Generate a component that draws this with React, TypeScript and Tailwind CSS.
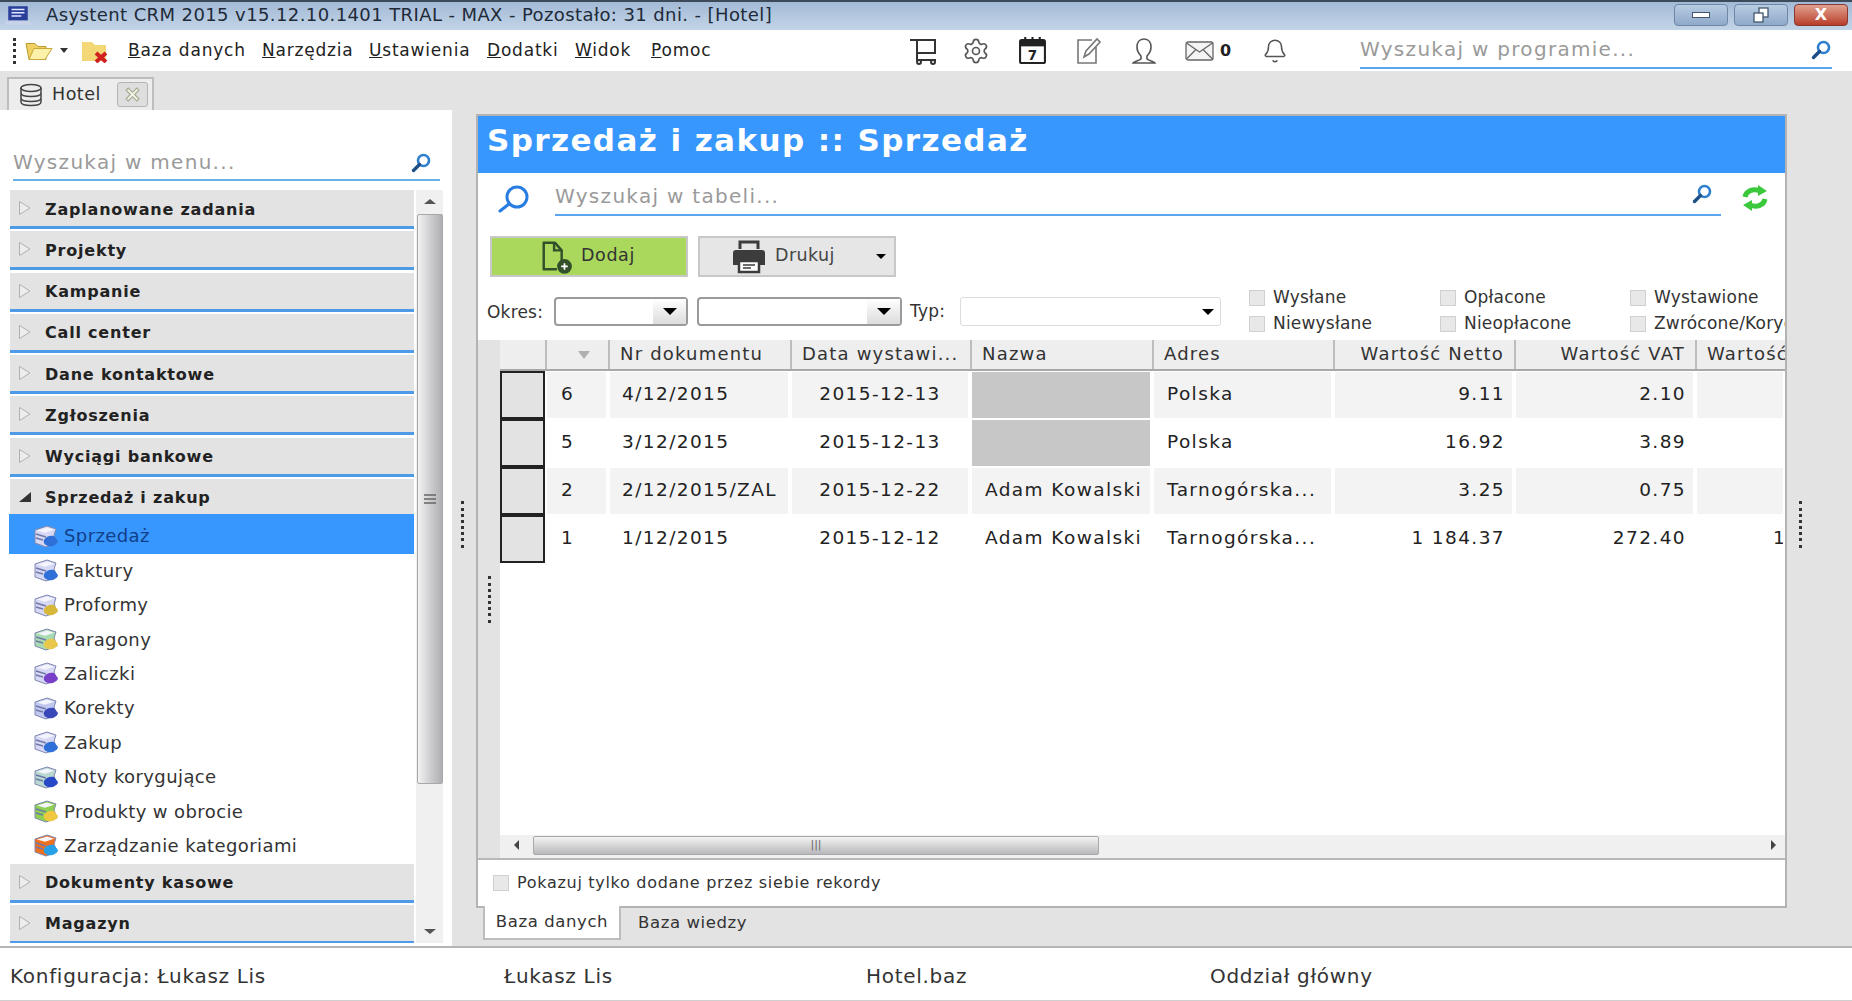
import { Settings, Bell } from 'lucide-react'

const font = "font-['DejaVu_Sans',sans-serif]"

const menus = [
  { first: 'B', rest: 'aza danych', w: 'w-[134px]' },
  { first: 'N', rest: 'arzędzia', w: 'w-[107px]' },
  { first: 'U', rest: 'stawienia', w: 'w-[118px]' },
  { first: 'D', rest: 'odatki', w: 'w-[88px]' },
  { first: 'W', rest: 'idok', w: 'w-[76px]' },
  { first: 'P', rest: 'omoc', w: 'w-[258px]' },
]

const groupsTop = ['Zaplanowane zadania', 'Projekty', 'Kampanie', 'Call center', 'Dane kontaktowe', 'Zgłoszenia', 'Wyciągi bankowe']

const items = [
  { label: 'Sprzedaż', a: '#d6d8f5', b: '#2f6fd8', active: true },
  { label: 'Faktury', a: '#d6d8f5', b: '#2f6fd8' },
  { label: 'Proformy', a: '#d6d8f5', b: '#d8b83a' },
  { label: 'Paragony', a: '#a8dcb0', b: '#e8c84a' },
  { label: 'Zaliczki', a: '#d6d8f5', b: '#7a3fc8' },
  { label: 'Korekty', a: '#c0c8f0', b: '#3848b8' },
  { label: 'Zakup', a: '#d6d8f5', b: '#2f6fd8' },
  { label: 'Noty korygujące', a: '#b8d8d0', b: '#2848c8' },
  { label: 'Produkty w obrocie', a: '#8fd050', b: '#f0c840' },
  { label: 'Zarządzanie kategoriami', a: '#f07020', b: '#28a0e8' },
]

const rows = [
  { id: '6', nr: '4/12/2015', date: '2015-12-13', name: '', addr: 'Polska', net: '9.11', vat: '2.10', rest: '' },
  { id: '5', nr: '3/12/2015', date: '2015-12-13', name: '', addr: 'Polska', net: '16.92', vat: '3.89', rest: '' },
  { id: '2', nr: '2/12/2015/ZAL', date: '2015-12-22', name: 'Adam Kowalski', addr: 'Tarnogórska...', net: '3.25', vat: '0.75', rest: '' },
  { id: '1', nr: '1/12/2015', date: '2015-12-12', name: 'Adam Kowalski', addr: 'Tarnogórska...', net: '1 184.37', vat: '272.40', rest: '1' },
]

const cols = 'grid grid-cols-[45px_63px_182px_180px_182px_181px_181px_181px_1fr]'

function Lens({ className = 'w-[22px] h-[22px]' }: { className?: string }) {
  return (
    <svg viewBox="0 0 22 22" className={className} fill="none">
      <circle cx="13.5" cy="8.5" r="5.5" stroke="#2f7fd0" strokeWidth="2.6" />
      <path d="M9.5 12.5 3.5 18.5" stroke="#1f4f86" strokeWidth="3.4" strokeLinecap="round" />
    </svg>
  )
}

function BoxIcon({ a, b }: { a: string; b: string }) {
  return (
    <svg viewBox="0 0 28 24" className="w-[28px] h-[24px] shrink-0">
      <path d="M3 6 15 2l9 3-2 6 3 8-11 4-11-4z" fill={a} stroke="#8088b0" strokeWidth="1" />
      <path d="M5 6.5 15 3.5l7 2.2-9 3z" fill="#f4f4fc" />
      <path d="M12 16c2-4 7-5 10-4l4 5c-1 4-6 6-10 5-3-1-5-3-4-6z" fill={b} />
      <path d="M4 10l10 3M4 14l7 2" stroke="#7078a8" strokeWidth="1.4" />
    </svg>
  )
}

function Dots({ className = '' }: { className?: string }) {
  return <div className={`w-[3px] h-[47px] border-l-[3px] border-dotted border-[#333333] ${className}`} />
}

function Group({ label, open = false, last = false }: { label: string; open?: boolean; last?: boolean }) {
  return (
    <div className={`ml-px ${open ? 'h-[35px] mt-[2px]' : 'h-[39px] mb-[2.3px] border-b-[3px] border-[#4f9ae6]'} ${last ? 'mb-0' : ''} bg-[#e3e3e3] flex items-center`}>
      <svg viewBox="0 0 14 16" className="w-[14px] h-[16px] ml-[8px] shrink-0">
        {open ? <path d="M1 13 13 3v10z" fill="#333333" /> : <path d="M1.5 1.5 12 8 1.5 14.5z" fill="#ededed" stroke="#b0b0b0" />}
      </svg>
      <span className="ml-[13px] pt-[3px] text-[16px] font-bold text-[#222222] tracking-[0.8px]">{label}</span>
    </div>
  )
}

function Check({ label }: { label: string }) {
  return (
    <div className="flex items-center w-[191px] h-[26px] whitespace-nowrap">
      <div className="w-[16px] h-[16px] border border-[#d0d0d0] bg-[#e8e8e8] shrink-0" />
      <span className="ml-[8px] text-[17px] tracking-[0.2px] text-[#333333]">{label}</span>
    </div>
  )
}

function Combo({ w }: { w: string }) {
  return (
    <div className={`${w} h-[29px] border-2 border-[#9a9a9a] rounded-[4px] bg-white flex justify-end shrink-0`}>
      <div className="w-[33px] bg-gradient-to-b from-white to-[#dcdcdc] flex items-center justify-center">
        <div className="w-0 h-0 border-x-[7px] border-x-transparent border-t-[7px] border-t-black" />
      </div>
    </div>
  )
}

function Head({ label, right = false }: { label: string; right?: boolean }) {
  return (
    <div className={`h-full border-l-2 border-[#bdbdbd] flex items-center overflow-hidden whitespace-nowrap pb-[2px] text-[18px] tracking-[1.2px] text-[#333333] ${right ? 'justify-end pr-[10px]' : 'pl-[10px]'}`}>
      {label}
    </div>
  )
}

function Cell({ children, bg, right = false, center = false, pad = 'pl-[10px]' }: { children?: React.ReactNode; bg: string; right?: boolean; center?: boolean; pad?: string }) {
  return (
    <div className={`${bg} mx-[2px] my-[1px] flex items-center overflow-hidden whitespace-nowrap pb-[2px] text-[18.5px] tracking-[1.4px] text-[#222222] ${right ? 'justify-end pr-[7px]' : center ? 'justify-center' : pad}`}>
      {children}
    </div>
  )
}

export default function App() {
  return (
    <div className={`${font} w-[1852px] h-[1001px] flex flex-col overflow-hidden bg-[#e3e3e3]`}>
      {/* title bar */}
      <div className="h-[30px] shrink-0 border-t-2 border-[#3c4a5a] bg-gradient-to-b from-[#a3bad6] to-[#c2d4e7] flex items-center">
        <svg viewBox="0 0 24 20" className="w-[26px] h-[22px] ml-[5px]">
          <rect x="3" y="1" width="18" height="13" fill="#2a3f9a" />
          <path d="M6 4h12M6 7h12M6 10h9" stroke="#dfe6ff" strokeWidth="1.2" />
          <rect x="0" y="15" width="24" height="3" fill="#c8d2e8" />
        </svg>
        <span className="ml-[15px] pb-[3px] text-[18px] text-[#1e2a38] tracking-[0.4px] whitespace-nowrap">
          Asystent CRM 2015 v15.12.10.1401 TRIAL - MAX - Pozostało: 31 dni. - [Hotel]
        </span>
        <div className="ml-auto mr-[4px] mt-[2px] flex items-start self-start gap-[6px]">
          <div className="w-[54px] h-[22px] border border-[#6f87a5] rounded-[4px] bg-gradient-to-b from-[#b8cde4] to-[#8fa9c9] flex items-center justify-center">
            <div className="w-[18px] h-[6px] border border-[#44566c] bg-white" />
          </div>
          <div className="w-[54px] h-[22px] border border-[#6f87a5] rounded-[4px] bg-gradient-to-b from-[#b8cde4] to-[#8fa9c9] flex items-center justify-center">
            <svg viewBox="0 0 16 16" className="w-[16px] h-[16px]" fill="#ffffff" stroke="#44566c" strokeWidth="1.3">
              <rect x="6" y="1" width="9" height="9" />
              <rect x="1" y="6" width="9" height="9" />
            </svg>
          </div>
          <div className="w-[54px] h-[22px] border border-[#8a3a30] rounded-[4px] bg-gradient-to-b from-[#e0a090] to-[#b83c28] flex items-center justify-center text-white font-bold text-[16px]">X</div>
        </div>
      </div>

      {/* toolbar */}
      <div className="h-[41px] shrink-0 bg-white flex items-center">
        <Dots className="!h-[26px] ml-[13px]" />
        <svg viewBox="0 0 30 24" className="w-[30px] h-[25px] ml-[8px]">
          <path d="M2 5h9l3 3h8v13H5z" fill="#f0d060" stroke="#b89a30" />
          <path d="M5 21 10 10h18l-7 11z" fill="#fdf0a8" stroke="#c8a838" />
        </svg>
        <div className="w-0 h-0 ml-[6px] border-x-[4px] border-x-transparent border-t-[5px] border-t-[#333333]" />
        <svg viewBox="0 0 30 24" className="w-[30px] h-[24px] ml-[12px]">
          <path d="M2 3h10l3 3h11v16H2z" fill="#f4d878" />
          <path d="M16 14l10 9m0-9-10 9" stroke="#d02020" strokeWidth="4" />
        </svg>
        <div className="ml-[18px] flex text-[17px] tracking-[0.8px] text-[#222222] whitespace-nowrap">
          {menus.map(m => (
            <div key={m.first} className={m.w}>
              <span className="underline">{m.first}</span>{m.rest}
            </div>
          ))}
        </div>
        <div className="flex items-center text-[#555555]">
          <svg viewBox="0 0 30 28" className="w-[30px] h-[28px]" fill="none" stroke="#333333" strokeWidth="2">
            <path d="M1 3h25v13H8M8 2v21h19" />
            <circle cx="10" cy="25" r="2" />
            <circle cx="24" cy="25" r="2" />
          </svg>
          <Settings className="w-[28px] h-[28px] ml-[23px]" strokeWidth={1.4} />
          <svg viewBox="0 0 28 28" className="w-[29px] h-[29px] ml-[28px]">
            <rect x="2" y="4" width="24" height="22" rx="1.5" fill="#fff" stroke="#222222" strokeWidth="2" />
            <rect x="2" y="4" width="24" height="6" fill="#222222" />
            <path d="M7 1v5M14 1v5M21 1v5" stroke="#222222" strokeWidth="2" />
            <text x="14" y="23" textAnchor="middle" fontSize="13" fontWeight="700" fill="#222222">7</text>
          </svg>
          <svg viewBox="0 0 28 28" className="w-[28px] h-[28px] ml-[27px]" fill="none" stroke="#777777" strokeWidth="1.6">
            <path d="M22 10v16H4V3h14" />
            <path d="M10 20l2-6L23 2l3 3-11 12z" />
          </svg>
          <svg viewBox="0 0 28 28" className="w-[28px] h-[28px] ml-[28px]" fill="none" stroke="#555555" strokeWidth="1.6">
            <path d="M14 2c-5 0-7 4-7 8 0 3 2 7 4 9v3c-2 2-7 2-8 4h22c-1-2-6-2-8-4v-3c2-2 4-6 4-9 0-4-2-8-7-8z" />
          </svg>
          <svg viewBox="0 0 29 20" className="w-[29px] h-[20px] ml-[27px]" fill="#f4f4f4" stroke="#666666" strokeWidth="1.3">
            <rect x="1" y="1" width="27" height="18" rx="2" />
            <path d="M1.5 2 14.5 11 27.5 2M1.5 18l9-9M27.5 18l-9-9" fill="none" />
          </svg>
          <span className="ml-[6px] w-[14px] text-[16px] font-bold text-[#222222]">0</span>
          <Bell className="w-[26px] h-[26px] ml-[28px]" strokeWidth={1.4} />
        </div>
        <div className="ml-[72px] w-[472px] h-[36px] border-b-2 border-[#5aa5ec] flex items-center justify-between">
          <span className="pb-[2px] text-[20px] tracking-[1.3px] text-[#9a9a9a] whitespace-nowrap">Wyszukaj w programie...</span>
          <Lens />
        </div>
      </div>

      {/* tab strip */}
      <div className="h-[39px] shrink-0 flex items-end pl-[7px]">
        <div className="w-[147px] h-[33px] border-2 border-b-0 border-[#bdbdbd] bg-[#ededed] flex items-center">
          <svg viewBox="0 0 24 24" className="w-[26px] h-[24px] ml-[9px]" fill="none" stroke="#444444" strokeWidth="1.5">
            <ellipse cx="12" cy="5" rx="10" ry="3.5" />
            <path d="M2 5v14c0 2 4 3.5 10 3.5S22 21 22 19V5M2 10c0 2 4 3.5 10 3.5S22 12 22 10M2 15c0 2 4 3.5 10 3.5S22 17 22 15" />
          </svg>
          <span className="ml-[8px] text-[17.5px] tracking-[0.5px] text-[#333333]">Hotel</span>
          <div className="ml-auto mr-[4px] w-[31px] h-[25px] border border-[#b5b5b5] rounded-[3px] bg-[#dedede] flex items-center justify-center">
            <svg viewBox="0 0 14 14" className="w-[15px] h-[15px]" fill="#f2f2e4" stroke="#a0a890" strokeWidth="1">
              <path d="M1 3 3 1l4 4 4-4 2 2-4 4 4 4-2 2-4-4-4 4-2-2 4-4z" />
            </svg>
          </div>
        </div>
      </div>

      {/* main area */}
      <div className="flex-1 min-h-0 flex">
        <div className="w-[452px] shrink-0 bg-white flex flex-col">
          <div className="h-[80px] shrink-0 pt-[36px] pl-[13px] pr-[12px]">
            <div className="h-[35px] border-b-2 border-[#6cb0e8] flex items-center justify-between pr-[8px]">
              <span className="pb-[2px] text-[20px] tracking-[1.3px] text-[#9a9a9a]">Wyszukaj w menu...</span>
              <Lens />
            </div>
          </div>
          <div className="flex-1 min-h-0 flex pl-[9px] pb-[3px]">
            <div className="w-[405px] shrink-0 overflow-hidden">
              {groupsTop.map(g => <Group key={g} label={g} />)}
              <Group label="Sprzedaż i zakup" open />
              {items.map(i => (
                <div key={i.label} className={`flex items-center pl-[23px] ${i.active ? 'h-[40px] pt-[3px] bg-[#3797fd] text-[#123f8a]' : 'h-[34.4px] -translate-y-[1px] text-[#333333]'}`}>
                  <BoxIcon a={i.a} b={i.b} />
                  <span className="ml-[4px] text-[18px] tracking-[0.4px] whitespace-nowrap">{i.label}</span>
                </div>
              ))}
              <Group label="Dokumenty kasowe" />
              <Group label="Magazyn" last />
            </div>
            <div className="ml-[2px] w-[27px] shrink-0 bg-[#f0f0f0] flex flex-col items-center">
              <div className="h-[24px] flex items-center pb-[2px]">
                <div className="w-0 h-0 border-x-[6px] border-x-transparent border-b-[5px] border-b-[#555555]" />
              </div>
              <div className="w-[26px] h-[570px] border border-[#a8a8a8] rounded-[2px] bg-gradient-to-r from-[#f2f2f2] via-[#cfcfd2] to-[#aeaeb2] flex items-center justify-center">
                <svg viewBox="0 0 12 10" className="w-[12px] h-[10px]" stroke="#666666" strokeWidth="1.5">
                  <path d="M0 1h12M0 5h12M0 9h12" />
                </svg>
              </div>
              <div className="flex-1" />
              <div className="h-[24px] flex items-center">
                <div className="w-0 h-0 border-x-[6px] border-x-transparent border-t-[5px] border-t-[#555555]" />
              </div>
            </div>
          </div>
        </div>

        <div className="w-[24px] shrink-0 flex items-center justify-center pb-[8px] pr-[4px]">
          <Dots />
        </div>

        <div className="w-[1311px] shrink-0 flex flex-col">
          <div className="h-[794px] mt-[4px] border-2 border-[#b3b3b3] bg-white flex flex-col">
            <div className="h-[57px] shrink-0 bg-[#3797fd] flex items-center pl-[9px] pb-[8px]">
              <span className="text-[31px] font-bold text-white tracking-[1.4px]">Sprzedaż i zakup :: Sprzedaż</span>
            </div>
            <div className="h-[63px] shrink-0 flex items-start">
              <svg viewBox="0 0 34 28" className="w-[34px] h-[28px] ml-[18px] mt-[12px]" fill="none" stroke="#2a7de0" strokeWidth="3">
                <circle cx="21" cy="12" r="10" />
                <path d="M13 19 4 26" strokeLinecap="round" />
              </svg>
              <div className="ml-[25px] w-[1166px] h-[43px] border-b-2 border-[#5aa5ec] flex items-center justify-between pr-[8px]">
                <span className="text-[20px] tracking-[1.3px] text-[#9a9a9a] pt-[4px]">Wyszukaj w tabeli...</span>
                <Lens />
              </div>
              <svg viewBox="0 0 28 26" className="w-[28px] h-[26px] ml-[20px] mt-[12px]" fill="none" stroke="#3cc83c" strokeWidth="5">
                <path d="M4 12c1-6 8-9 15-6" />
                <path d="M24 14c-1 6-8 9-15 6" />
                <path d="M17 0l9 6-9 5zM11 15l-9 5 9 6z" fill="#3cc83c" stroke="none" />
              </svg>
            </div>
            <div className="h-[41px] shrink-0 flex pl-[12px] gap-[10px]">
              <div className="w-[198px] border-2 border-[#c8c8c8] bg-[#a9d85c] flex items-center pl-[44px]">
                <svg viewBox="0 0 36 36" className="w-[40px] h-[34px]" fill="none" stroke="#33502a" strokeWidth="2.6">
                  <path d="M24 24V11l-7-8H5v28h14" strokeLinejoin="round" />
                  <path d="M16 3v8h8" />
                  <circle cx="27" cy="28" r="6.5" fill="#33502a" />
                  <path d="M27 24.5v7M23.5 28h7" stroke="#ffffff" strokeWidth="1.8" />
                </svg>
                <span className="ml-[5px] pb-[2px] text-[17.5px] tracking-[0.6px] text-[#333333]">Dodaj</span>
              </div>
              <div className="w-[198px] border-2 border-[#c8c8c8] bg-[#e6e6e6] flex items-center">
                <svg viewBox="0 0 36 34" className="w-[36px] h-[34px] ml-[31px]">
                  <path d="M2 13a3 3 0 0 1 3-3h26a3 3 0 0 1 3 3v12h-5v-5H7v5H2z" fill="#3c3c3c" />
                  <path d="M9 9V2h18v7" fill="none" stroke="#3c3c3c" strokeWidth="3" />
                  <path d="M8 21h20v11H8z" fill="#fff" stroke="#3c3c3c" strokeWidth="2.5" />
                  <path d="M12 25h12M12 28h8" stroke="#3c3c3c" strokeWidth="1.5" />
                </svg>
                <span className="ml-[8px] pb-[2px] text-[17.5px] tracking-[0.4px] text-[#444444]">Drukuj</span>
                <div className="ml-auto mr-[8px] w-0 h-0 border-x-[5px] border-x-transparent border-t-[5px] border-t-black" />
              </div>
            </div>
            <div className="h-[63px] shrink-0 flex items-start pl-[9px]">
              <span className="w-[67px] mt-[23px] text-[17px] tracking-[0.2px] text-[#333333]">Okres:</span>
              <div className="mt-[20px] flex items-center">
                <Combo w="w-[134px]" />
                <div className="w-[9px]" />
                <Combo w="w-[205px]" />
                <span className="ml-[8px] w-[50px] text-[17px] tracking-[0.2px] text-[#333333]">Typ:</span>
                <div className="w-[261px] h-[29px] border border-[#dcdcdc] rounded-[3px] flex items-center justify-end pr-[6px]">
                  <div className="w-0 h-0 border-x-[6px] border-x-transparent border-t-[6px] border-t-black" />
                </div>
              </div>
              <div className="ml-[28px] mt-[8px] w-[536px] overflow-hidden grid grid-cols-[191px_190px_191px]">
                <Check label="Wysłane" />
                <Check label="Opłacone" />
                <Check label="Wystawione" />
                <Check label="Niewysłane" />
                <Check label="Nieopłacone" />
                <Check label="Zwrócone/Korygujące" />
              </div>
            </div>

            {/* table */}
            <div className="flex-1 min-h-0 flex">
              <div className="w-[22px] shrink-0 bg-[#e3e3e3] flex justify-center pt-[236px]">
                <Dots />
              </div>
              <div className="flex-1 min-w-0 flex flex-col">
                <div className={`${cols} h-[31px] shrink-0 bg-[#eeeeee] border-b-2 border-[#a8a8a8]`}>
                  <div />
                  <div className="h-full border-l-2 border-[#bdbdbd] flex items-center justify-center pl-[12px]">
                    <div className="w-0 h-0 border-x-[6px] border-x-transparent border-t-[8px] border-t-[#b0b0b0]" />
                  </div>
                  <Head label="Nr dokumentu" />
                  <Head label="Data wystawi..." />
                  <Head label="Nazwa" />
                  <Head label="Adres" />
                  <Head label="Wartość Netto" right />
                  <Head label="Wartość VAT" right />
                  <Head label="Wartość" />
                </div>
                <div className="flex-1 min-h-0">
                  {rows.map((r, i) => {
                    const bg = i % 2 === 0 ? 'bg-[#f3f3f3]' : 'bg-white'
                    return (
                      <div key={r.id} className={`${cols} h-[48px]`}>
                        <div className="bg-[#e3e3e3] border-2 border-[#222222]" />
                        <Cell bg={bg} pad="pl-[14px]">{r.id}</Cell>
                        <Cell bg={bg} pad="pl-[12px]">{r.nr}</Cell>
                        <Cell bg={bg} center>{r.date}</Cell>
                        {r.name ? <Cell bg={bg} pad="pl-[13px]">{r.name}</Cell> : <Cell bg="bg-[#c7c7c7]" />}
                        <Cell bg={bg} pad="pl-[13px]">{r.addr}</Cell>
                        <Cell bg={bg} right>{r.net}</Cell>
                        <Cell bg={bg} right>{r.vat}</Cell>
                        <Cell bg={bg} pad="pl-[76px]">{r.rest}</Cell>
                      </div>
                    )
                  })}
                </div>
                <div className="h-[23px] shrink-0 bg-[#f0f0f0] flex items-center pb-[3px]">
                  <div className="w-[33px] flex justify-center">
                    <div className="w-0 h-0 border-y-[5px] border-y-transparent border-r-[5px] border-r-[#444444]" />
                  </div>
                  <div className="w-[566px] h-[19px] border border-[#a8a8a8] rounded-[2px] bg-gradient-to-b from-[#f4f4f4] to-[#b8b8bc] flex items-center justify-center text-[11px] text-[#666666]">|||</div>
                  <div className="ml-auto mr-[9px] w-0 h-0 border-y-[5px] border-y-transparent border-l-[5px] border-l-[#444444]" />
                </div>
              </div>
            </div>

            <div className="h-[48px] shrink-0 border-t-2 border-[#b8b8b8] flex items-center pl-[15px]">
              <div className="w-[16px] h-[16px] border border-[#d0d0d0] bg-[#e8e8e8]" />
              <span className="ml-[8px] text-[16px] tracking-[0.7px] text-[#333333]">Pokazuj tylko dodane przez siebie rekordy</span>
            </div>
          </div>
          <div className="flex pl-[7px] -mt-[2px]">
            <div className="w-[138px] h-[34px] border-x-2 border-b-2 border-[#bdbdbd] bg-white flex items-center justify-center text-[16.5px] tracking-[0.6px] text-[#333333]">Baza danych</div>
            <div className="ml-[17px] h-[34px] flex items-center text-[16.5px] tracking-[0.6px] text-[#333333]">Baza wiedzy</div>
          </div>
        </div>

        <div className="flex-1 flex items-center pl-[12px] pb-[8px]">
          <Dots />
        </div>
      </div>

      {/* status bar */}
      <div className="h-[55px] shrink-0 bg-white border-t-2 border-[#b5b5b5] border-b border-b-[#cfcfcf] flex items-center pt-[3px] text-[20px] tracking-[0.7px] text-[#333333] whitespace-nowrap">
        <div className="w-[504px] pl-[10px]">Konfiguracja: Łukasz Lis</div>
        <div className="w-[362px]">Łukasz Lis</div>
        <div className="w-[344px]">Hotel.baz</div>
        <div>Oddział główny</div>
      </div>
    </div>
  )
}
